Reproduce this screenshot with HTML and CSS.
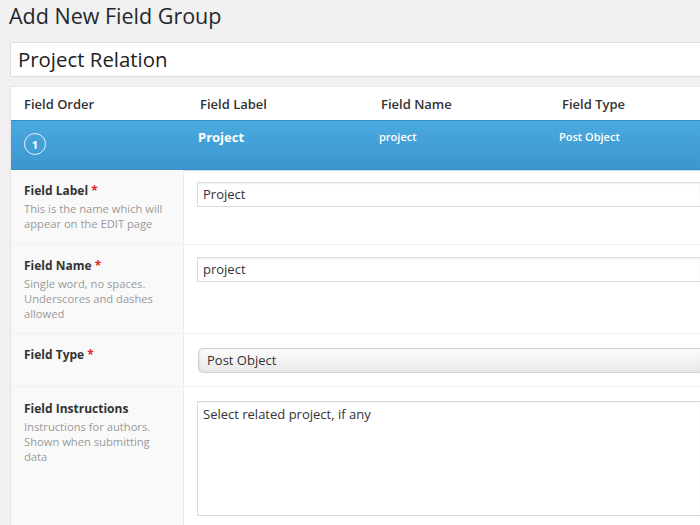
FILE: index.html
```html
<!DOCTYPE html>
<html>
<head>
<meta charset="utf-8">
<link rel="stylesheet" href="styles.css">
</head>
<body>
<div class="wrap">
  <h1 class="title">Add New Field Group</h1>
  <div class="title-input">Project Relation</div>
  <div class="box">
    <div class="cols head">
      <div class="c1">Field Order</div>
      <div class="c2">Field Label</div>
      <div class="c3">Field Name</div>
      <div class="c4">Field Type</div>
    </div>
    <div class="cols meta">
      <div class="c1"><span class="order">1</span></div>
      <div class="c2 m-label">Project</div>
      <div class="c3 m-name">project</div>
      <div class="c4 m-name">Post Object</div>
    </div>
    <div class="row r1">
      <div class="lab">
        <div class="name">Field Label <span class="req">*</span></div>
        <div class="desc">This is the name which will<br>appear on the EDIT page</div>
      </div>
      <div class="val"><div class="inp">Project</div></div>
    </div>
    <div class="row r2">
      <div class="lab">
        <div class="name">Field Name <span class="req">*</span></div>
        <div class="desc">Single word, no spaces.<br>Underscores and dashes<br>allowed</div>
      </div>
      <div class="val"><div class="inp">project</div></div>
    </div>
    <div class="row r3">
      <div class="lab">
        <div class="name">Field Type <span class="req">*</span></div>
      </div>
      <div class="val sel-cell"><div class="sel">Post Object</div></div>
    </div>
    <div class="row r4">
      <div class="lab">
        <div class="name">Field Instructions</div>
        <div class="desc">Instructions for authors.<br>Shown when submitting<br>data</div>
      </div>
      <div class="val ta-cell"><div class="ta">Select related project, if any</div></div>
    </div>
  </div>
</div>
</body>
</html>
```
FILE: styles.css
```css
html, body {
  margin: 0;
  padding: 0;
  overflow: hidden;
  background: #f1f1f1;
}
body {
  font-family: "Open Sans", "Liberation Sans", sans-serif;
  color: #333;
  width: 700px;
  height: 525px;
}
.wrap {
  width: 690px;
  padding-left: 10px;
}
.title {
  margin: 0;
  padding: 1px 0 0 0;
  margin-left: -1px;
  font-size: 21.5px;
  font-weight: 400;
  line-height: 29px;
  color: #23282d;
  height: 40px;
  box-sizing: border-box;
}
.title-input {
  margin-top: 2px;
  height: 35px;
  box-sizing: border-box;
  background: #fff;
  border: 1px solid #dedede;
  border-right: none;
  font-size: 20.4px;
  line-height: 33px;
  padding-left: 7px;
  color: #222;
}
.box {
  margin-top: 9px;
  background: #fff;
  border-left: 1px solid #e3e3e3;
  border-top: 1px solid #e8e8e8;
}
.cols {
  display: grid;
  grid-template-columns: 175px 181px 181px 1fr;
}
.head {
  height: 33px;
  align-items: center;
  font-size: 13px;
  font-weight: 600;
  color: #333;
}
.head > div {
  padding-left: 14px;
  padding-top: 0;
}
.head .c1 { padding-left: 13px; }
.meta {
  height: 50px;
  box-sizing: border-box;
  background: linear-gradient(#4aaadf, #3d96cd);
  border-top: 1px solid #2f8cc4;
  border-bottom: 1px solid #3a8dc2;
  box-shadow: 0 1px 0 #c4e2f3;
  color: #fff;
}
.meta .c1 {
  padding-left: 13px;
  padding-top: 12px;
}
.order {
  display: flex;
  align-items: center;
  justify-content: center;
  width: 20px;
  height: 20px;
  border: 1px solid rgba(255,255,255,0.85);
  border-radius: 50%;
  font-size: 11px;
  font-weight: 700;
  line-height: 1;
}
.m-label {
  font-size: 13px;
  font-weight: 700;
  padding-top: 6px;
  line-height: 20px;
}
.m-name {
  font-size: 11px;
  font-weight: 600;
  padding-top: 7px;
  line-height: 18px;
}
.meta .c2 { padding-left: 12px; }
.meta .c3 { padding-left: 12px; }
.meta .c4 { padding-left: 11px; }
.row {
  display: grid;
  grid-template-columns: 173px 1fr;
  border-top: 1px solid #f0f0f0;
}
.row.r1 { border-top: none; }
.lab {
  background: #f9f9f9;
  border-right: 1px solid #ebebeb;
  padding: 12px 10px 12px 13px;
}
.r1 .lab { padding-bottom: 13px; }
.name {
  font-size: 12px;
  font-weight: 700;
  line-height: 17px;
  color: #333;
}
.req {
  color: #e32424;
  font-weight: 700;
}
.desc {
  margin-top: 2px;
  font-size: 11.2px;
  line-height: 15px;
  color: #999;
}
.val {
  padding: 12px 0 0 13px;
}
.inp {
  height: 25px;
  box-sizing: border-box;
  border: 1px solid #dcdcdc;
  border-right: none;
  box-shadow: inset 0 1px 2px rgba(0,0,0,0.07);
  font-size: 13px;
  line-height: 23px;
  padding-left: 5px;
  color: #333;
  background: #fff;
}
.sel-cell {
  padding-top: 14px;
  padding-bottom: 13px;
  padding-left: 14px;
}
.sel {
  height: 25px;
  box-sizing: border-box;
  border: 1px solid #d2d2d2;
  border-right: none;
  border-radius: 5px 0 0 5px;
  background: linear-gradient(#fdfdfd, #f2f2f2 50%, #e9e9e9);
  box-shadow: inset 1px 0 2px rgba(0,0,0,0.08);
  font-size: 13px;
  line-height: 23px;
  padding-left: 8px;
  color: #333;
}
.r4 { height: 140px; }
.r4 .lab { padding-top: 13px; }
.ta-cell {
  padding-top: 14px;
}
.ta {
  height: 115px;
  box-sizing: border-box;
  border: 1px solid #dcdcdc;
  border-right: none;
  box-shadow: inset 0 1px 2px rgba(0,0,0,0.05);
  font-size: 13px;
  line-height: 18px;
  padding: 3px 5px;
  color: #333;
  background: #fff;
}
```
